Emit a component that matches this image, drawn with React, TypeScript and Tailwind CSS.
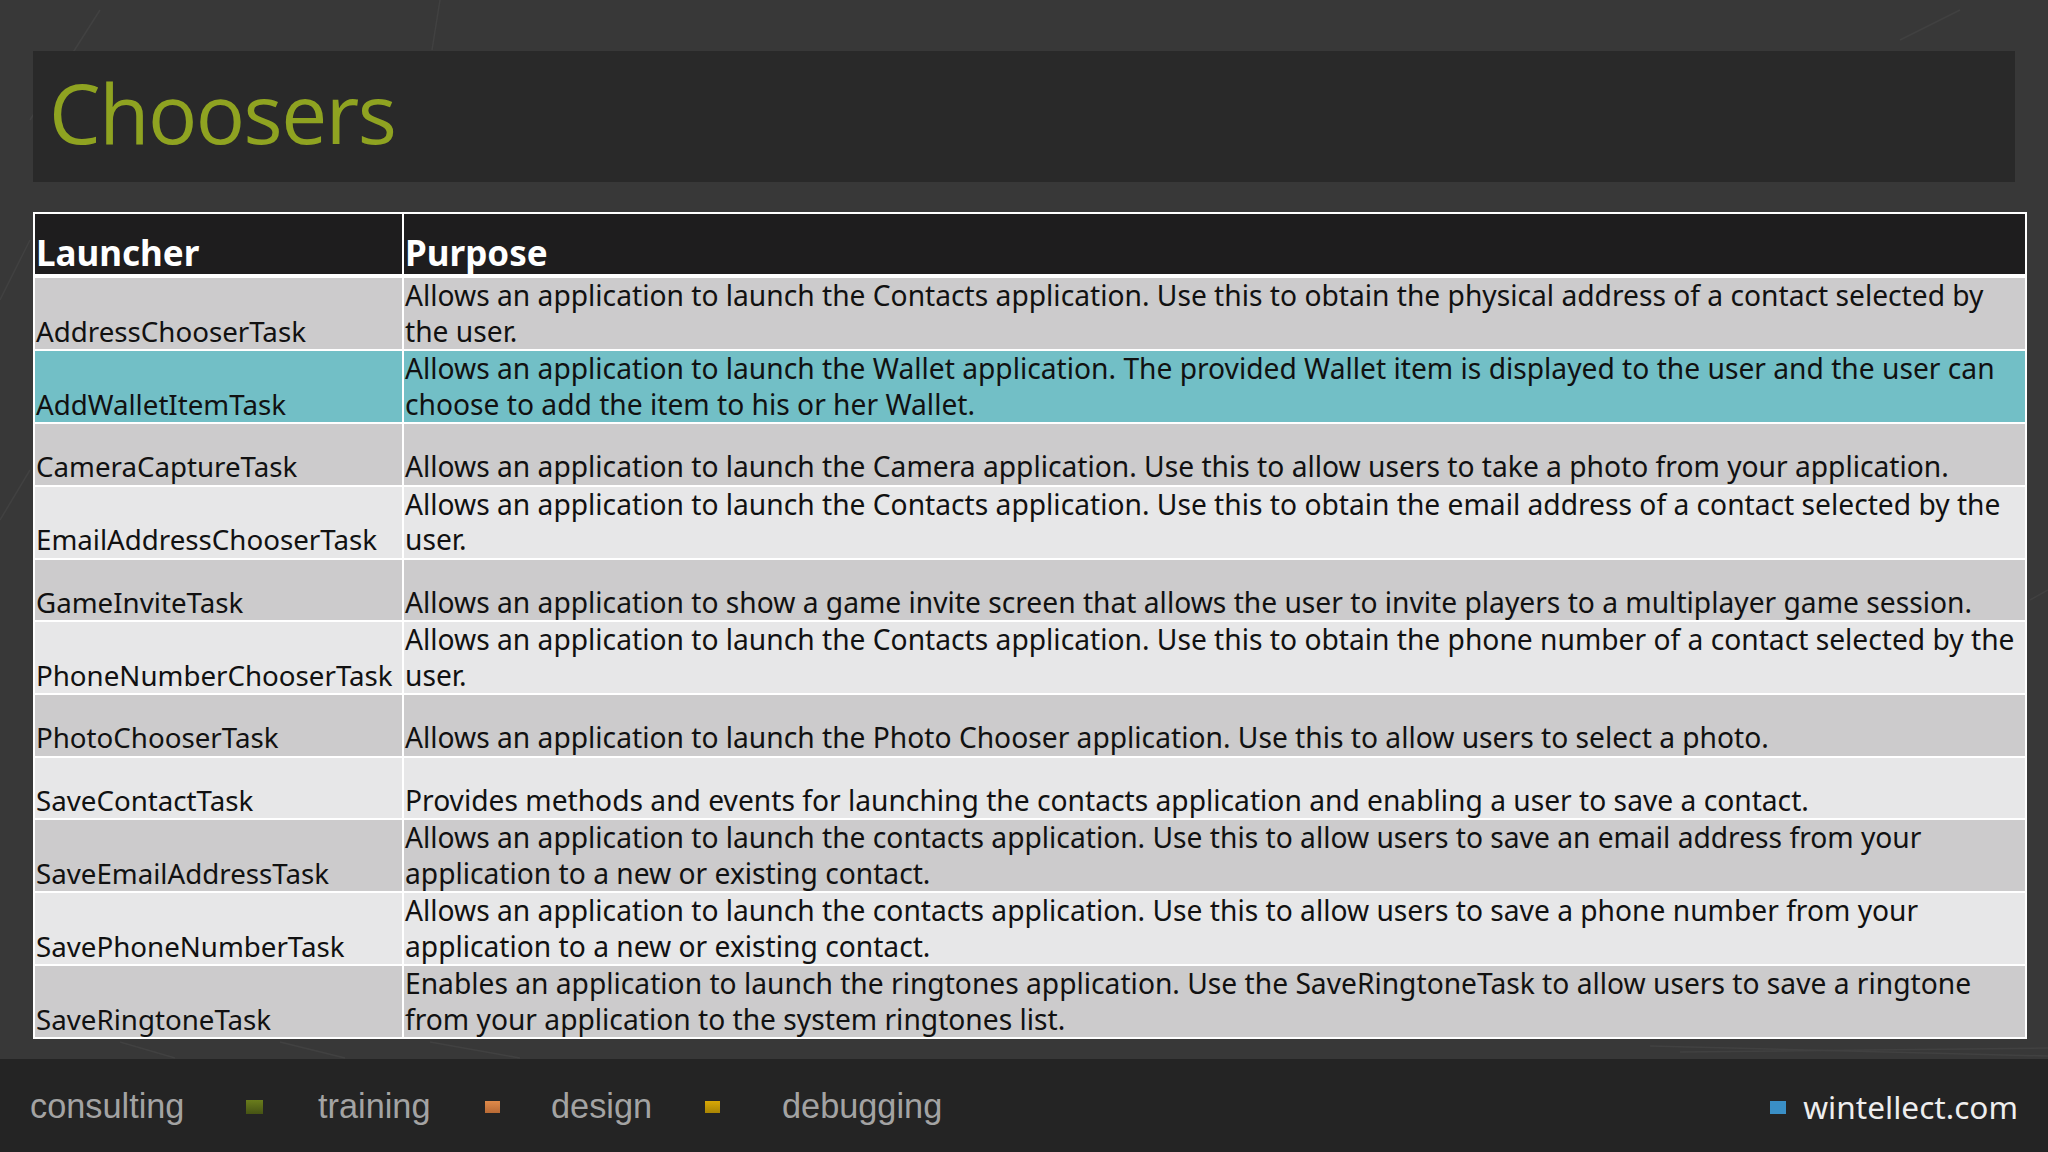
const rows = [
  { name: "AddressChooserTask", purpose: ["Allows an application to launch the Contacts application. Use this to obtain the physical address of a contact selected by", "the user."], tall: true },
  { name: "AddWalletItemTask", purpose: ["Allows an application to launch the Wallet application. The provided Wallet item is displayed to the user and the user can", "choose to add the item to his or her Wallet."], tall: true, active: true },
  { name: "CameraCaptureTask", purpose: ["Allows an application to launch the Camera application. Use this to allow users to take a photo from your application."] },
  { name: "EmailAddressChooserTask", purpose: ["Allows an application to launch the Contacts application. Use this to obtain the email address of a contact selected by the", "user."], tall: true },
  { name: "GameInviteTask", purpose: ["Allows an application to show a game invite screen that allows the user to invite players to a multiplayer game session."] },
  { name: "PhoneNumberChooserTask", purpose: ["Allows an application to launch the Contacts application. Use this to obtain the phone number of a contact selected by the", "user."], tall: true },
  { name: "PhotoChooserTask", purpose: ["Allows an application to launch the Photo Chooser application. Use this to allow users to select a photo."] },
  { name: "SaveContactTask", purpose: ["Provides methods and events for launching the contacts application and enabling a user to save a contact."] },
  { name: "SaveEmailAddressTask", purpose: ["Allows an application to launch the contacts application. Use this to allow users to save an email address from your", "application to a new or existing contact."], tall: true },
  { name: "SavePhoneNumberTask", purpose: ["Allows an application to launch the contacts application. Use this to allow users to save a phone number from your", "application to a new or existing contact."], tall: true },
  { name: "SaveRingtoneTask", purpose: ["Enables an application to launch the ringtones application. Use the SaveRingtoneTask to allow users to save a ringtone", "from your application to the system ringtones list."], tall: true },
];

function rowColor(i: number, active?: boolean) {
  if (active) return "bg-[#72bfc6]";
  return i % 2 === 0 ? "bg-[#cccbcc]" : "bg-[#e7e7e8]";
}

function Scratches() {
  return (
    <svg className="absolute inset-0 h-full w-full" viewBox="0 0 2048 1152">
      <g stroke="#4a4a4a" strokeWidth="1.5" fill="none" opacity="0.5">
        <path d="M1960 10 L1900 40" />
        <path d="M440 0 L432 50" />
        <path d="M100 10 L30 120" />
        <path d="M0 300 L30 240" />
        <path d="M0 520 L30 470" />
        <path d="M120 1042 L175 1058" />
        <path d="M280 1042 L345 1058" />
        <path d="M430 1042 L520 1058" />
        <path d="M1650 1046 L2048 1056" />
        <path d="M1680 1052 L2048 1048" />
        <path d="M2030 600 L2048 590" />
      </g>
    </svg>
  );
}

export default function App() {
  return (
    <div className="relative flex h-[1152px] w-[2048px] flex-col overflow-hidden bg-[#383838] font-['Noto_Sans',sans-serif]">
      <Scratches />

      {/* title band */}
      <div className="relative mt-[51px] ml-[33px] flex h-[131px] w-[1982px] items-center bg-[#292929] pb-[9px] pl-[16px]">
        <h1 className="text-[82px] leading-none tracking-[-1.5px] text-[#8fa321] font-['Open_Sans',sans-serif] font-normal">Choosers</h1>
      </div>

      {/* table */}
      <div className="relative mt-[30px] ml-[33px] w-[1994px]">
        <table className="w-full table-fixed border-collapse border-2 border-white text-[#111] text-[28.2px] leading-[35.5px]">
          <colgroup>
            <col className="w-[369px]" />
            <col />
          </colgroup>
          <thead>
            <tr className="h-[63px] border-b-[4px] border-white bg-[#1e1d1e] text-white">
              <th className="border-r-2 border-white pl-[1px] text-left align-bottom text-[35px] leading-[42px] font-bold">Launcher</th>
              <th className="pl-[1px] text-left align-bottom text-[35px] leading-[42px] font-bold">Purpose</th>
            </tr>
          </thead>
          <tbody>
            {rows.map((r, i) => (
              <tr key={r.name} className={`${rowColor(i, r.active)} ${r.tall ? "h-[73px]" : "h-[62.5px]"} border-b-2 border-white`}>
                <td className="whitespace-nowrap border-r-2 border-white pl-[1px] align-bottom text-[27.7px]">{r.name}</td>
                <td className="pl-[1px] align-bottom">
                  {r.purpose.map((line) => (
                    <div key={line} className="whitespace-nowrap">{line}</div>
                  ))}
                </td>
              </tr>
            ))}
          </tbody>
        </table>
      </div>

      {/* footer */}
      <div className="absolute right-0 bottom-0 left-0 flex h-[93px] items-center bg-[#242424] pt-[3px] pr-[30px] pl-[30px] text-[34.3px] text-[#a3a3a3] font-['Liberation_Sans',sans-serif]">
        <span className="w-[216px]">consulting</span>
        <span className="h-[14px] w-[17px] bg-gradient-to-b from-[#6a7d1c] to-[#465314]" />
        <span className="ml-[55px] w-[167px]">training</span>
        <span className="h-[12px] w-[15px] bg-gradient-to-b from-[#e08a4a] to-[#b86a35]" />
        <span className="ml-[51px] w-[154px]">design</span>
        <span className="h-[12px] w-[15px] bg-gradient-to-b from-[#d9a806] to-[#a88404]" />
        <span className="ml-[62px]">debugging</span>
        <span className="ml-auto h-[13px] w-[16px] bg-[#3a8fc6]" />
        <span className="ml-[17px] text-[31.6px] text-[#eeeeee] font-['Noto_Sans',sans-serif]">wintellect.com</span>
      </div>
    </div>
  );
}
